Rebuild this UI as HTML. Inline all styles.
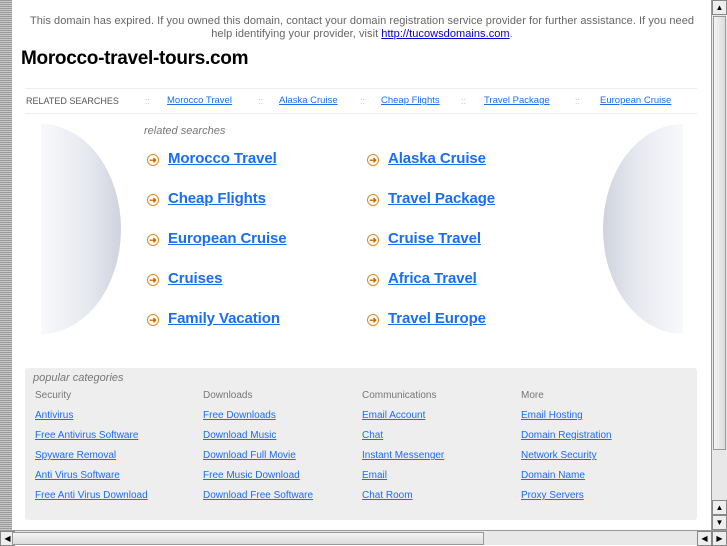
<!DOCTYPE html>
<html><head><style>
body{margin:0;width:727px;height:545px;overflow:hidden;background:#fff;font-family:"Liberation Sans",sans-serif;position:relative}
.lbar{position:absolute;left:0;top:0;width:12px;height:530px;background:repeating-linear-gradient(#9a9a9a 0 1px,#c8c8c8 1px 2px)}
.vs{position:absolute;left:711px;top:0;width:16px;height:530px;background:#e8e8e8;border-left:1px solid #999;box-sizing:border-box}
.thumb{position:absolute;left:1px;top:16px;width:13px;height:434px;background:linear-gradient(90deg,#f4f4f4,#dcdcdc);border:1px solid #999;box-sizing:border-box}
.btn{position:absolute;width:15px;height:15px;background:#eee;border:1px solid #888;box-sizing:border-box;font-size:8px;line-height:13px;text-align:center;color:#000}
.hs{position:absolute;left:0;top:530px;width:727px;height:15px;background:#e8e8e8;border-top:1px solid #999;box-sizing:border-box}
.hthumb{position:absolute;left:12px;top:1px;width:472px;height:13px;background:linear-gradient(#f4f4f4,#dcdcdc);border:1px solid #999;box-sizing:border-box}
a{color:#1a6ef0}
.top{position:absolute;left:12px;top:15px;width:700px;text-align:center;font-size:11px;line-height:13px;color:#666;letter-spacing:0.05px;white-space:nowrap}
.top a{color:#00c}
h1{position:absolute;left:21px;top:48px;margin:0;font-size:19px;font-weight:bold;color:#000;letter-spacing:-0.3px}
.rs{position:absolute;left:25px;top:88px;width:672px;height:24px;border-top:1px solid #eee;border-bottom:1px solid #eee;font-size:9px;line-height:24px;color:#555}
.rs span,.rs a{position:absolute;top:0}
.rs a{font-size:9.5px}
.sep{color:#bbb}
.ball{position:absolute;top:124px;width:80px;height:210px}
.bl{left:41px;background:linear-gradient(90deg,#f8f9fb,#e6e8ef 60%,#cfd3de);border-radius:0 100% 100% 0/0 50% 50% 0}
.br{left:603px;background:linear-gradient(90deg,#cfd3de,#e6e8ef 40%,#f8f9fb);border-radius:100% 0 0 100%/50% 0 0 50%}
.rl{position:absolute;left:144px;top:125px;font-size:11px;font-style:italic;color:#777}
.lk{position:absolute;font-size:15px;font-weight:bold;letter-spacing:-0.1px}
.lk a{color:#1a6ef0}
.ar{display:inline-block;width:10px;height:10px;border:1.5px solid #e08a1e;border-radius:50%;position:absolute;left:-21px;top:4px;color:#c86d00;font-size:9px;line-height:10px;text-align:center;font-weight:bold}
.pc{position:absolute;left:25px;top:368px;width:672px;height:152px;background:#eee;border-radius:3px}
.pc .t{position:absolute;left:8px;top:4px;font-size:11px;font-style:italic;color:#777}
.col{position:absolute;font-size:10px;line-height:20px}
.col div{color:#777}
.col a{display:block;color:#1a6ef0}
</style></head><body>
<div class="lbar"></div>
<div class="top">This domain has expired. If you owned this domain, contact your domain registration service provider for further assistance. If you need<br>help identifying your provider, visit <a href="#">http://tucowsdomains.com</a>.</div>
<h1>Morocco-travel-tours.com</h1>
<div class="rs"><span style="left:1px">RELATED SEARCHES</span>
<span class="sep" style="left:120px">::</span><a href="#" style="left:142px">Morocco Travel</a>
<span class="sep" style="left:233px">::</span><a href="#" style="left:254px">Alaska Cruise</a>
<span class="sep" style="left:335px">::</span><a href="#" style="left:356px">Cheap Flights</a>
<span class="sep" style="left:436px">::</span><a href="#" style="left:459px">Travel Package</a>
<span class="sep" style="left:550px">::</span><a href="#" style="left:575px">European Cruise</a></div>
<div class="ball bl"></div><div class="ball br"></div>
<div class="rl">related searches</div>
<div class="lk" style="left:168px;top:150px"><span class="ar">➜</span><a href="#">Morocco Travel</a></div>
<div class="lk" style="left:168px;top:190px"><span class="ar">➜</span><a href="#">Cheap Flights</a></div>
<div class="lk" style="left:168px;top:230px"><span class="ar">➜</span><a href="#">European Cruise</a></div>
<div class="lk" style="left:168px;top:270px"><span class="ar">➜</span><a href="#">Cruises</a></div>
<div class="lk" style="left:168px;top:310px"><span class="ar">➜</span><a href="#">Family Vacation</a></div>
<div class="lk" style="left:388px;top:150px"><span class="ar">➜</span><a href="#">Alaska Cruise</a></div>
<div class="lk" style="left:388px;top:190px"><span class="ar">➜</span><a href="#">Travel Package</a></div>
<div class="lk" style="left:388px;top:230px"><span class="ar">➜</span><a href="#">Cruise Travel</a></div>
<div class="lk" style="left:388px;top:270px"><span class="ar">➜</span><a href="#">Africa Travel</a></div>
<div class="lk" style="left:388px;top:310px"><span class="ar">➜</span><a href="#">Travel Europe</a></div>
<div class="pc"><div class="t">popular categories</div>
<div class="col" style="left:10px;top:18px"><div>Security</div><a href="#">Antivirus</a><a href="#">Free Antivirus Software</a><a href="#">Spyware Removal</a><a href="#">Anti Virus Software</a><a href="#">Free Anti Virus Download</a></div>
<div class="col" style="left:178px;top:18px"><div>Downloads</div><a href="#">Free Downloads</a><a href="#">Download Music</a><a href="#">Download Full Movie</a><a href="#">Free Music Download</a><a href="#">Download Free Software</a></div>
<div class="col" style="left:337px;top:18px"><div>Communications</div><a href="#">Email Account</a><a href="#">Chat</a><a href="#">Instant Messenger</a><a href="#">Email</a><a href="#">Chat Room</a></div>
<div class="col" style="left:496px;top:18px"><div>More</div><a href="#">Email Hosting</a><a href="#">Domain Registration</a><a href="#">Network Security</a><a href="#">Domain Name</a><a href="#">Proxy Servers</a></div>
</div>
<div class="vs"><div class="btn" style="left:0;top:0">▲</div><div class="thumb"></div>
<div class="btn" style="left:0;top:500px">▲</div><div class="btn" style="left:0;top:515px">▼</div></div>
<div class="hs"><div class="btn" style="left:0;top:0">◀</div><div class="hthumb"></div>
<div class="btn" style="left:697px;top:0">◀</div><div class="btn" style="left:712px;top:0">▶</div></div>
</body></html>
